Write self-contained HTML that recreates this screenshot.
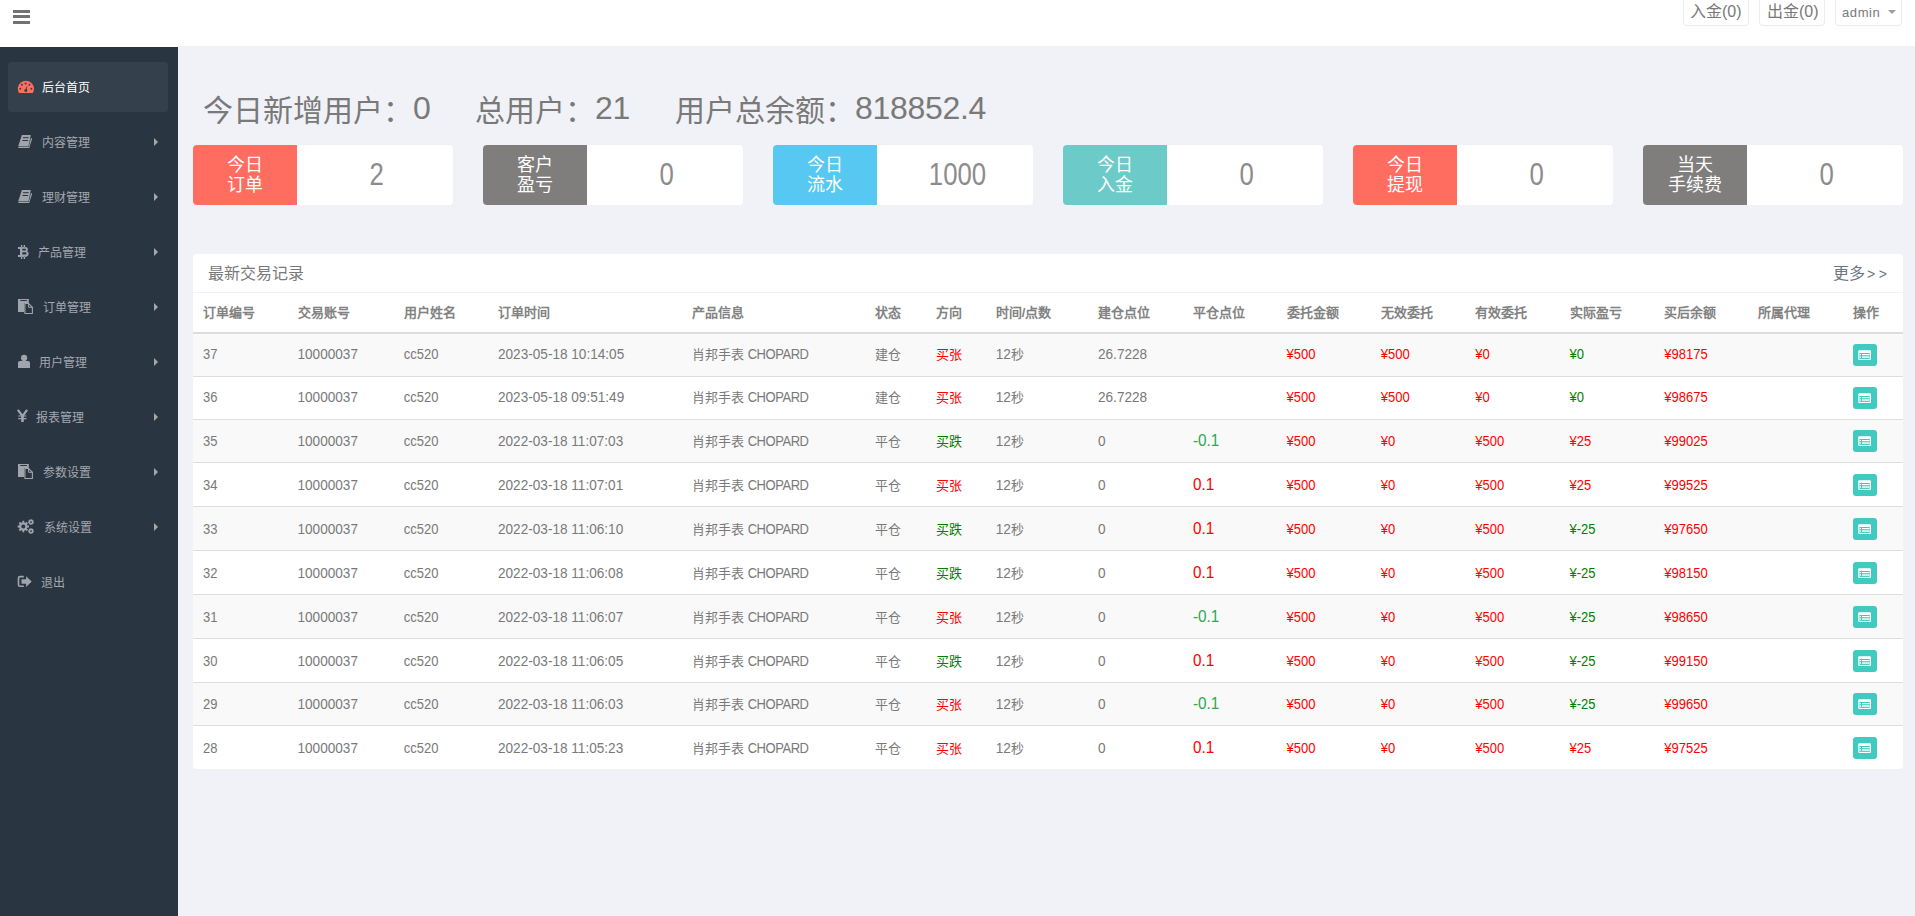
<!DOCTYPE html>
<html lang="zh-CN"><head><meta charset="utf-8"><title>后台首页</title>
<style>
*{box-sizing:border-box;margin:0;padding:0}
html,body{width:1915px;height:916px;overflow:hidden}
body{background:#f1f2f7;font-family:"Liberation Sans",sans-serif;color:#797979;position:relative}
.a{position:absolute;white-space:nowrap}
#hdr{left:0;top:0;width:1915px;height:46px;background:#fff}
.bar{position:absolute;left:13px;width:17px;height:3px;background:#727272}
.tb{position:absolute;top:-6px;height:32px;border:1px solid #ebebf0;border-radius:4px;background:#fff;color:#797979;font-size:16px;line-height:20px}
#side{left:0;top:47px;width:178px;height:869px;background:#2a3542}
.mi{position:absolute;left:0;width:178px;height:20px;font-size:12px;line-height:20px;color:#aeb2b7}
.mi .t{position:absolute;top:1px}
.mi svg{position:absolute}
.mi .arr{position:absolute;left:154px;top:6px;width:0;height:0;border-top:4px solid transparent;border-bottom:4px solid transparent;border-left:4px solid #a6a7a9}
.big{font-size:30px;line-height:34px;color:#797979}
.dg{position:relative;top:-2px;font-size:32px;letter-spacing:-0.3px}
.st{position:absolute;top:145px;width:260px;height:60px;background:#fff;border-radius:4px;overflow:hidden}
.st .sym{position:absolute;left:0;top:0;width:104px;height:60px;color:#fff;font-size:18px;line-height:20px;text-align:center;padding-top:10px}
.st .val{position:absolute;left:104px;top:0;width:156px;height:60px;text-align:center;font-size:31px;line-height:59px;color:#8c8c8c;padding-left:4px}
.st .val span{display:inline-block;transform:scaleX(0.83)}
#panel{left:193px;top:254px;width:1710px;height:515px;background:#fff;border-radius:4px;overflow:hidden}
.th{font-size:13px;font-weight:bold;color:#828282;line-height:20px}
.td{font-size:13px;color:#797979;line-height:20px}
.nb{font-size:13.6px}
.L{display:inline-block;transform:scaleY(1.1);transform-origin:0 14px}
.r{color:#ff0000}.g{color:#008000}
.pr{color:#ff0000;font-size:17px}.pg{color:#2eaa4f;font-size:17px}
.pr,.pg{transform:scaleX(0.9);transform-origin:0 0}
.btn{position:absolute;width:24px;height:22px;background:#41cac0;border-radius:3px}
</style></head><body>

<div id="hdr" class="a">
<div class="bar" style="top:10px"></div>
<div class="bar" style="top:15px"></div>
<div class="bar" style="top:21px"></div>
<div class="tb" style="left:1683px;width:66px"><span class="a" style="left:6px;top:7px">入金(0)</span></div>
<div class="tb" style="left:1759px;width:66px"><span class="a" style="left:7px;top:7px">出金(0)</span></div>
<div class="tb" style="left:1835px;width:67px"><span class="a" style="left:6px;top:10px;font-size:13px;letter-spacing:0.6px;line-height:16px">admin</span><span class="a" style="left:52px;top:15px;width:0;height:0;border-left:4px solid transparent;border-right:4px solid transparent;border-top:4px solid #9a9ca8"></span></div>
</div>
<div id="side" class="a"></div>
<div class="a" style="left:0;top:46px;width:178px;height:1px;background:#fff"></div>
<div class="a" style="left:8px;top:62px;width:160px;height:50px;background:#35404d;border-radius:4px"></div>
<div class="mi" style="top:77px;color:#fff;font-weight:500"><svg style="left:17px;top:3px" width="18" height="14" viewBox="0 0 18 14"><path d="M2.04 13.1A8.1 8.1 0 1 1 15.76 13.1z" fill="#ff6c60"/><g fill="#35404d"><circle cx="8.6" cy="3.4" r="1"/><circle cx="5" cy="4.8" r="1"/><circle cx="12.4" cy="4.8" r="1"/><circle cx="3.3" cy="8.7" r="1"/><circle cx="14.4" cy="8.7" r="1"/><circle cx="8.8" cy="10.4" r="1.5"/><path d="M8 10.2L10.4 5.3 9.6 10.6z"/></g></svg><span class="t" style="left:42px">后台首页</span>
</div>
<div class="mi" style="top:132px;color:#a4a8ae"><svg style="left:18px;top:3px" width="15" height="14" viewBox="0 0 15 14"><g fill="#a0a4ac"><path d="M3.9 0H12.8L10.5 11.2H0.2z"/><path d="M12.9 2.9L14.2 3.5 11.2 13H10.6z"/><path d="M0.1 11.8H11V13.1H0.6z"/></g><path d="M5 2.7H10.7M4.4 5.5H10.1" stroke="#2a3542" stroke-width="1"/></svg><span class="t" style="left:42px">内容管理</span>
<span class="arr"></span>
</div>
<div class="mi" style="top:187px;color:#a4a8ae"><svg style="left:18px;top:3px" width="15" height="14" viewBox="0 0 15 14"><g fill="#a0a4ac"><path d="M3.9 0H12.8L10.5 11.2H0.2z"/><path d="M12.9 2.9L14.2 3.5 11.2 13H10.6z"/><path d="M0.1 11.8H11V13.1H0.6z"/></g><path d="M5 2.7H10.7M4.4 5.5H10.1" stroke="#2a3542" stroke-width="1"/></svg><span class="t" style="left:41.5px">理财管理</span>
<span class="arr"></span>
</div>
<div class="mi" style="top:242px;color:#a4a8ae"><svg style="left:18px;top:3px" width="11" height="15" viewBox="0 0 11 15"><path fill="#a0a4ac" fill-rule="evenodd" d="M0 2.1H7.2C9.2 2.1 9.9 3.3 9.9 4.4 9.9 5.4 9.4 5.9 8.7 6.3 9.9 6.6 10.6 7.4 10.6 8.7 10.6 10.6 9.3 11.9 7 11.9H0V10H2V4H0Z M4.3 3.7H6.9C7.6 3.7 8 4.1 8 4.7 8 5.3 7.6 5.6 6.9 5.6H4.3Z M4.3 7.2H7.2C8 7.2 8.5 7.6 8.5 8.3 8.5 9.1 8 9.5 7.2 9.5H4.3Z M2.9 0H4.3V2.2H2.9Z M5.7 0H7.1V2.2H5.7Z M2.9 11.8H4.3V14H2.9Z M5.7 11.8H7.1V14H5.7Z"/></svg><span class="t" style="left:38px">产品管理</span>
<span class="arr"></span>
</div>
<div class="mi" style="top:297px;color:#a4a8ae"><svg style="left:18px;top:2px" width="16" height="16" viewBox="0 0 16 16"><path fill="#a0a4ac" fill-rule="evenodd" d="M0 0H10.8V3.9H6.2V12.9H0Z M2.3 1H8.9V2.1H2.3Z"/><path d="M6.9 4.5H10.6L14.4 8.3V14.5H6.9Z" fill="none" stroke="#a0a4ac" stroke-width="1.1"/><path d="M10.6 4.5V8.3H14.4" fill="none" stroke="#a0a4ac" stroke-width="1"/></svg><span class="t" style="left:42.5px">订单管理</span>
<span class="arr"></span>
</div>
<div class="mi" style="top:352px;color:#a4a8ae"><svg style="left:18px;top:2px" width="13" height="15" viewBox="0 0 13 15"><g fill="#a0a4ac"><circle cx="6.1" cy="3.9" r="3.1"/><path d="M0 14V9C0 7.8 0.8 7 2 7H10C11.2 7 12 7.8 12 9V14Z"/></g></svg><span class="t" style="left:39px">用户管理</span>
<span class="arr"></span>
</div>
<div class="mi" style="top:407px;color:#a4a8ae"><svg style="left:17px;top:2px" width="12" height="15" viewBox="0 0 12 15"><g fill="none" stroke="#a0a4ac"><path d="M0.9 0.9L5.5 7.2 10.1 0.9" stroke-width="2.2"/><path d="M5.5 6.8V13" stroke-width="2.6"/><path d="M1.2 7H9.4M1.2 9.6H9.4" stroke-width="1.1"/></g></svg><span class="t" style="left:36px">报表管理</span>
<span class="arr"></span>
</div>
<div class="mi" style="top:462px;color:#a4a8ae"><svg style="left:18px;top:2px" width="16" height="16" viewBox="0 0 16 16"><path fill="#a0a4ac" fill-rule="evenodd" d="M0 0H10.8V3.9H6.2V12.9H0Z M2.3 1H8.9V2.1H2.3Z"/><path d="M6.9 4.5H10.6L14.4 8.3V14.5H6.9Z" fill="none" stroke="#a0a4ac" stroke-width="1.1"/><path d="M10.6 4.5V8.3H14.4" fill="none" stroke="#a0a4ac" stroke-width="1"/></svg><span class="t" style="left:42.5px">参数设置</span>
<span class="arr"></span>
</div>
<div class="mi" style="top:517px;color:#a4a8ae"><svg style="left:17px;top:2px" width="19" height="17" viewBox="0 0 19 17"><g fill="#a0a4ac"><circle cx="6.3" cy="7.5" r="4.2"/><g stroke="#a0a4ac" stroke-width="1.8"><path d="M6.3 1.8V13.2M0.6 7.5H12M2.3 3.5L10.3 11.5M2.3 11.5L10.3 3.5"/></g><circle cx="14" cy="3.1" r="2.1"/><circle cx="14" cy="12.1" r="2.1"/><g stroke="#a0a4ac" stroke-width="1.2"><path d="M14 0.1V6.1M11 3.1H17M11.9 1L16.1 5.2M11.9 5.2L16.1 1M14 9.1V15.1M11 12.1H17M11.9 10L16.1 14.2M11.9 14.2L16.1 10"/></g></g><g fill="#2a3542"><circle cx="6.3" cy="7.5" r="2"/><circle cx="14" cy="3.1" r="0.95"/><circle cx="14" cy="12.1" r="0.95"/></g></svg><span class="t" style="left:44px">系统设置</span>
<span class="arr"></span>
</div>
<div class="mi" style="top:572px;color:#a4a8ae"><svg style="left:17px;top:3px" width="15" height="13" viewBox="0 0 15 13"><path d="M6.8 1.6H3C1.9 1.6 1.5 2.2 1.5 3.2V9.8C1.5 10.8 1.9 11.3 3 11.3H6.8" fill="none" stroke="#a0a4ac" stroke-width="1.6"/><path d="M4.5 4.2H9.1V1.2L14.7 6.5 9.1 12V8.8H4.5Z" fill="#a0a4ac"/></svg><span class="t" style="left:41px">退出</span>
</div>
<div class="a big" style="left:203px;top:93px">今日新增用户：<span class="dg">0</span></div>
<div class="a big" style="left:475px;top:93px">总用户：<span class="dg">21</span></div>
<div class="a big" style="left:675px;top:93px">用户总余额：<span class="dg">818852.4</span></div>
<div class="st" style="left:193px"><div class="sym" style="background:#ff6c60">今日<br>订单</div><div class="val"><span>2</span></div></div>
<div class="st" style="left:483px"><div class="sym" style="background:#7f7e7d">客户<br>盈亏</div><div class="val"><span>0</span></div></div>
<div class="st" style="left:773px"><div class="sym" style="background:#57c8f2">今日<br>流水</div><div class="val"><span>1000</span></div></div>
<div class="st" style="left:1063px"><div class="sym" style="background:#6ccac9">今日<br>入金</div><div class="val"><span>0</span></div></div>
<div class="st" style="left:1353px"><div class="sym" style="background:#ff6c60">今日<br>提现</div><div class="val"><span>0</span></div></div>
<div class="st" style="left:1643px"><div class="sym" style="background:#7f7e7d">当天<br>手续费</div><div class="val"><span>0</span></div></div>
<div id="panel" class="a">
<span class="a" style="left:15px;top:10px;font-size:16px;line-height:20px;color:#797979">最新交易记录</span>
<span class="a" style="left:1640px;top:10px;font-size:16px;line-height:20px;color:#6b7583">更多<span style="font-size:14px;letter-spacing:3.5px;position:relative;left:2px">&gt;&gt;</span></span>
<div class="a" style="left:0;top:38px;width:1710px;height:1px;background:#eff2f7"></div>
<span class="a th" style="left:10px;top:49px">订单编号</span>
<span class="a th" style="left:104.5px;top:49px">交易账号</span>
<span class="a th" style="left:210.75px;top:49px">用户姓名</span>
<span class="a th" style="left:305px;top:49px">订单时间</span>
<span class="a th" style="left:499px;top:49px">产品信息</span>
<span class="a th" style="left:682px;top:49px">状态</span>
<span class="a th" style="left:742.5px;top:49px">方向</span>
<span class="a th" style="left:802.75px;top:49px">时间/点数</span>
<span class="a th" style="left:905px;top:49px">建仓点位</span>
<span class="a th" style="left:999.5px;top:49px">平仓点位</span>
<span class="a th" style="left:1093.5px;top:49px">委托金额</span>
<span class="a th" style="left:1187.75px;top:49px">无效委托</span>
<span class="a th" style="left:1282.25px;top:49px">有效委托</span>
<span class="a th" style="left:1376.5px;top:49px">实际盈亏</span>
<span class="a th" style="left:1471.25px;top:49px">买后余额</span>
<span class="a th" style="left:1565.25px;top:49px">所属代理</span>
<span class="a th" style="left:1659.5px;top:49px">操作</span>
<div class="a" style="left:0;top:78px;width:1710px;height:2px;background:#dddddd"></div>
<div class="a" style="left:0;top:80px;width:1710px;height:42px;background:#f9f9f9"></div>
<div class="a" style="left:0;top:122px;width:1710px;height:1px;background:#dddddd"></div>
<span class="a td" style="left:10px;top:91.0px"><span class="L">37</span></span>
<span class="a td nb" style="left:104.5px;top:91.0px"><span class="L">10000037</span></span>
<span class="a td" style="left:210.75px;top:91.0px"><span class="L">cc520</span></span>
<span class="a td nb" style="left:305px;top:91.0px"><span class="L">2023-05-18 10:14:05</span></span>
<span class="a td" style="left:499px;top:91.0px">肖邦手表 <span class="L" style="letter-spacing:-0.45px">CHOPARD</span></span>
<span class="a td" style="left:682px;top:91.0px">建仓</span>
<span class="a td r" style="left:742.5px;top:91.0px">买张</span>
<span class="a td" style="left:802.75px;top:91.0px"><span class="nb L">12</span>秒</span>
<span class="a td nb" style="left:905px;top:91.0px"><span class="L">26.7228</span></span>
<span class="a td r" style="left:1093.5px;top:91.0px"><span class="L">¥500</span></span>
<span class="a td r" style="left:1187.75px;top:91.0px"><span class="L">¥500</span></span>
<span class="a td r" style="left:1282.25px;top:91.0px"><span class="L">¥0</span></span>
<span class="a td g" style="left:1376.5px;top:91.0px"><span class="L">¥0</span></span>
<span class="a td r" style="left:1471.25px;top:91.0px"><span class="L">¥98175</span></span>
<div class="btn" style="left:1660px;top:90.0px"><svg width="24" height="22" viewBox="0 0 24 22"><rect x="5.2" y="6.2" width="12.8" height="9.8" rx="1.2" fill="#fff"/><rect x="6.4" y="9" width="10.4" height="5.9" fill="#41cac0"/><rect x="9" y="10" width="7.6" height="1.2" fill="#fff"/><rect x="9" y="12.2" width="7.6" height="1.7" fill="#dff5f3"/><rect x="6.4" y="10" width="1.6" height="1.2" fill="#fff"/><rect x="6.4" y="12.2" width="1.6" height="1.7" fill="#dff5f3"/></svg></div>
<div class="a" style="left:0;top:165px;width:1710px;height:1px;background:#dddddd"></div>
<span class="a td" style="left:10px;top:134.0px"><span class="L">36</span></span>
<span class="a td nb" style="left:104.5px;top:134.0px"><span class="L">10000037</span></span>
<span class="a td" style="left:210.75px;top:134.0px"><span class="L">cc520</span></span>
<span class="a td nb" style="left:305px;top:134.0px"><span class="L">2023-05-18 09:51:49</span></span>
<span class="a td" style="left:499px;top:134.0px">肖邦手表 <span class="L" style="letter-spacing:-0.45px">CHOPARD</span></span>
<span class="a td" style="left:682px;top:134.0px">建仓</span>
<span class="a td r" style="left:742.5px;top:134.0px">买张</span>
<span class="a td" style="left:802.75px;top:134.0px"><span class="nb L">12</span>秒</span>
<span class="a td nb" style="left:905px;top:134.0px"><span class="L">26.7228</span></span>
<span class="a td r" style="left:1093.5px;top:134.0px"><span class="L">¥500</span></span>
<span class="a td r" style="left:1187.75px;top:134.0px"><span class="L">¥500</span></span>
<span class="a td r" style="left:1282.25px;top:134.0px"><span class="L">¥0</span></span>
<span class="a td g" style="left:1376.5px;top:134.0px"><span class="L">¥0</span></span>
<span class="a td r" style="left:1471.25px;top:134.0px"><span class="L">¥98675</span></span>
<div class="btn" style="left:1660px;top:133.0px"><svg width="24" height="22" viewBox="0 0 24 22"><rect x="5.2" y="6.2" width="12.8" height="9.8" rx="1.2" fill="#fff"/><rect x="6.4" y="9" width="10.4" height="5.9" fill="#41cac0"/><rect x="9" y="10" width="7.6" height="1.2" fill="#fff"/><rect x="9" y="12.2" width="7.6" height="1.7" fill="#dff5f3"/><rect x="6.4" y="10" width="1.6" height="1.2" fill="#fff"/><rect x="6.4" y="12.2" width="1.6" height="1.7" fill="#dff5f3"/></svg></div>
<div class="a" style="left:0;top:166px;width:1710px;height:42px;background:#f9f9f9"></div>
<div class="a" style="left:0;top:208px;width:1710px;height:1px;background:#dddddd"></div>
<span class="a td" style="left:10px;top:178.0px"><span class="L">35</span></span>
<span class="a td nb" style="left:104.5px;top:178.0px"><span class="L">10000037</span></span>
<span class="a td" style="left:210.75px;top:178.0px"><span class="L">cc520</span></span>
<span class="a td nb" style="left:305px;top:178.0px"><span class="L">2022-03-18 11:07:03</span></span>
<span class="a td" style="left:499px;top:178.0px">肖邦手表 <span class="L" style="letter-spacing:-0.45px">CHOPARD</span></span>
<span class="a td" style="left:682px;top:178.0px">平仓</span>
<span class="a td g" style="left:742.5px;top:178.0px">买跌</span>
<span class="a td" style="left:802.75px;top:178.0px"><span class="nb L">12</span>秒</span>
<span class="a td nb" style="left:905px;top:178.0px"><span class="L">0</span></span>
<span class="a pg" style="left:999.5px;top:176.0px;line-height:22px">-0.1</span>
<span class="a td r" style="left:1093.5px;top:178.0px"><span class="L">¥500</span></span>
<span class="a td r" style="left:1187.75px;top:178.0px"><span class="L">¥0</span></span>
<span class="a td r" style="left:1282.25px;top:178.0px"><span class="L">¥500</span></span>
<span class="a td r" style="left:1376.5px;top:178.0px"><span class="L">¥25</span></span>
<span class="a td r" style="left:1471.25px;top:178.0px"><span class="L">¥99025</span></span>
<div class="btn" style="left:1660px;top:176.0px"><svg width="24" height="22" viewBox="0 0 24 22"><rect x="5.2" y="6.2" width="12.8" height="9.8" rx="1.2" fill="#fff"/><rect x="6.4" y="9" width="10.4" height="5.9" fill="#41cac0"/><rect x="9" y="10" width="7.6" height="1.2" fill="#fff"/><rect x="9" y="12.2" width="7.6" height="1.7" fill="#dff5f3"/><rect x="6.4" y="10" width="1.6" height="1.2" fill="#fff"/><rect x="6.4" y="12.2" width="1.6" height="1.7" fill="#dff5f3"/></svg></div>
<div class="a" style="left:0;top:252px;width:1710px;height:1px;background:#dddddd"></div>
<span class="a td" style="left:10px;top:221.5px"><span class="L">34</span></span>
<span class="a td nb" style="left:104.5px;top:221.5px"><span class="L">10000037</span></span>
<span class="a td" style="left:210.75px;top:221.5px"><span class="L">cc520</span></span>
<span class="a td nb" style="left:305px;top:221.5px"><span class="L">2022-03-18 11:07:01</span></span>
<span class="a td" style="left:499px;top:221.5px">肖邦手表 <span class="L" style="letter-spacing:-0.45px">CHOPARD</span></span>
<span class="a td" style="left:682px;top:221.5px">平仓</span>
<span class="a td r" style="left:742.5px;top:221.5px">买张</span>
<span class="a td" style="left:802.75px;top:221.5px"><span class="nb L">12</span>秒</span>
<span class="a td nb" style="left:905px;top:221.5px"><span class="L">0</span></span>
<span class="a pr" style="left:999.5px;top:219.5px;line-height:22px">0.1</span>
<span class="a td r" style="left:1093.5px;top:221.5px"><span class="L">¥500</span></span>
<span class="a td r" style="left:1187.75px;top:221.5px"><span class="L">¥0</span></span>
<span class="a td r" style="left:1282.25px;top:221.5px"><span class="L">¥500</span></span>
<span class="a td r" style="left:1376.5px;top:221.5px"><span class="L">¥25</span></span>
<span class="a td r" style="left:1471.25px;top:221.5px"><span class="L">¥99525</span></span>
<div class="btn" style="left:1660px;top:219.5px"><svg width="24" height="22" viewBox="0 0 24 22"><rect x="5.2" y="6.2" width="12.8" height="9.8" rx="1.2" fill="#fff"/><rect x="6.4" y="9" width="10.4" height="5.9" fill="#41cac0"/><rect x="9" y="10" width="7.6" height="1.2" fill="#fff"/><rect x="9" y="12.2" width="7.6" height="1.7" fill="#dff5f3"/><rect x="6.4" y="10" width="1.6" height="1.2" fill="#fff"/><rect x="6.4" y="12.2" width="1.6" height="1.7" fill="#dff5f3"/></svg></div>
<div class="a" style="left:0;top:253px;width:1710px;height:43px;background:#f9f9f9"></div>
<div class="a" style="left:0;top:296px;width:1710px;height:1px;background:#dddddd"></div>
<span class="a td" style="left:10px;top:265.5px"><span class="L">33</span></span>
<span class="a td nb" style="left:104.5px;top:265.5px"><span class="L">10000037</span></span>
<span class="a td" style="left:210.75px;top:265.5px"><span class="L">cc520</span></span>
<span class="a td nb" style="left:305px;top:265.5px"><span class="L">2022-03-18 11:06:10</span></span>
<span class="a td" style="left:499px;top:265.5px">肖邦手表 <span class="L" style="letter-spacing:-0.45px">CHOPARD</span></span>
<span class="a td" style="left:682px;top:265.5px">平仓</span>
<span class="a td g" style="left:742.5px;top:265.5px">买跌</span>
<span class="a td" style="left:802.75px;top:265.5px"><span class="nb L">12</span>秒</span>
<span class="a td nb" style="left:905px;top:265.5px"><span class="L">0</span></span>
<span class="a pr" style="left:999.5px;top:263.5px;line-height:22px">0.1</span>
<span class="a td r" style="left:1093.5px;top:265.5px"><span class="L">¥500</span></span>
<span class="a td r" style="left:1187.75px;top:265.5px"><span class="L">¥0</span></span>
<span class="a td r" style="left:1282.25px;top:265.5px"><span class="L">¥500</span></span>
<span class="a td g" style="left:1376.5px;top:265.5px"><span class="L">¥-25</span></span>
<span class="a td r" style="left:1471.25px;top:265.5px"><span class="L">¥97650</span></span>
<div class="btn" style="left:1660px;top:263.5px"><svg width="24" height="22" viewBox="0 0 24 22"><rect x="5.2" y="6.2" width="12.8" height="9.8" rx="1.2" fill="#fff"/><rect x="6.4" y="9" width="10.4" height="5.9" fill="#41cac0"/><rect x="9" y="10" width="7.6" height="1.2" fill="#fff"/><rect x="9" y="12.2" width="7.6" height="1.7" fill="#dff5f3"/><rect x="6.4" y="10" width="1.6" height="1.2" fill="#fff"/><rect x="6.4" y="12.2" width="1.6" height="1.7" fill="#dff5f3"/></svg></div>
<div class="a" style="left:0;top:340px;width:1710px;height:1px;background:#dddddd"></div>
<span class="a td" style="left:10px;top:309.5px"><span class="L">32</span></span>
<span class="a td nb" style="left:104.5px;top:309.5px"><span class="L">10000037</span></span>
<span class="a td" style="left:210.75px;top:309.5px"><span class="L">cc520</span></span>
<span class="a td nb" style="left:305px;top:309.5px"><span class="L">2022-03-18 11:06:08</span></span>
<span class="a td" style="left:499px;top:309.5px">肖邦手表 <span class="L" style="letter-spacing:-0.45px">CHOPARD</span></span>
<span class="a td" style="left:682px;top:309.5px">平仓</span>
<span class="a td g" style="left:742.5px;top:309.5px">买跌</span>
<span class="a td" style="left:802.75px;top:309.5px"><span class="nb L">12</span>秒</span>
<span class="a td nb" style="left:905px;top:309.5px"><span class="L">0</span></span>
<span class="a pr" style="left:999.5px;top:307.5px;line-height:22px">0.1</span>
<span class="a td r" style="left:1093.5px;top:309.5px"><span class="L">¥500</span></span>
<span class="a td r" style="left:1187.75px;top:309.5px"><span class="L">¥0</span></span>
<span class="a td r" style="left:1282.25px;top:309.5px"><span class="L">¥500</span></span>
<span class="a td g" style="left:1376.5px;top:309.5px"><span class="L">¥-25</span></span>
<span class="a td r" style="left:1471.25px;top:309.5px"><span class="L">¥98150</span></span>
<div class="btn" style="left:1660px;top:307.5px"><svg width="24" height="22" viewBox="0 0 24 22"><rect x="5.2" y="6.2" width="12.8" height="9.8" rx="1.2" fill="#fff"/><rect x="6.4" y="9" width="10.4" height="5.9" fill="#41cac0"/><rect x="9" y="10" width="7.6" height="1.2" fill="#fff"/><rect x="9" y="12.2" width="7.6" height="1.7" fill="#dff5f3"/><rect x="6.4" y="10" width="1.6" height="1.2" fill="#fff"/><rect x="6.4" y="12.2" width="1.6" height="1.7" fill="#dff5f3"/></svg></div>
<div class="a" style="left:0;top:341px;width:1710px;height:43px;background:#f9f9f9"></div>
<div class="a" style="left:0;top:384px;width:1710px;height:1px;background:#dddddd"></div>
<span class="a td" style="left:10px;top:353.5px"><span class="L">31</span></span>
<span class="a td nb" style="left:104.5px;top:353.5px"><span class="L">10000037</span></span>
<span class="a td" style="left:210.75px;top:353.5px"><span class="L">cc520</span></span>
<span class="a td nb" style="left:305px;top:353.5px"><span class="L">2022-03-18 11:06:07</span></span>
<span class="a td" style="left:499px;top:353.5px">肖邦手表 <span class="L" style="letter-spacing:-0.45px">CHOPARD</span></span>
<span class="a td" style="left:682px;top:353.5px">平仓</span>
<span class="a td r" style="left:742.5px;top:353.5px">买张</span>
<span class="a td" style="left:802.75px;top:353.5px"><span class="nb L">12</span>秒</span>
<span class="a td nb" style="left:905px;top:353.5px"><span class="L">0</span></span>
<span class="a pg" style="left:999.5px;top:351.5px;line-height:22px">-0.1</span>
<span class="a td r" style="left:1093.5px;top:353.5px"><span class="L">¥500</span></span>
<span class="a td r" style="left:1187.75px;top:353.5px"><span class="L">¥0</span></span>
<span class="a td r" style="left:1282.25px;top:353.5px"><span class="L">¥500</span></span>
<span class="a td g" style="left:1376.5px;top:353.5px"><span class="L">¥-25</span></span>
<span class="a td r" style="left:1471.25px;top:353.5px"><span class="L">¥98650</span></span>
<div class="btn" style="left:1660px;top:351.5px"><svg width="24" height="22" viewBox="0 0 24 22"><rect x="5.2" y="6.2" width="12.8" height="9.8" rx="1.2" fill="#fff"/><rect x="6.4" y="9" width="10.4" height="5.9" fill="#41cac0"/><rect x="9" y="10" width="7.6" height="1.2" fill="#fff"/><rect x="9" y="12.2" width="7.6" height="1.7" fill="#dff5f3"/><rect x="6.4" y="10" width="1.6" height="1.2" fill="#fff"/><rect x="6.4" y="12.2" width="1.6" height="1.7" fill="#dff5f3"/></svg></div>
<div class="a" style="left:0;top:428px;width:1710px;height:1px;background:#dddddd"></div>
<span class="a td" style="left:10px;top:397.5px"><span class="L">30</span></span>
<span class="a td nb" style="left:104.5px;top:397.5px"><span class="L">10000037</span></span>
<span class="a td" style="left:210.75px;top:397.5px"><span class="L">cc520</span></span>
<span class="a td nb" style="left:305px;top:397.5px"><span class="L">2022-03-18 11:06:05</span></span>
<span class="a td" style="left:499px;top:397.5px">肖邦手表 <span class="L" style="letter-spacing:-0.45px">CHOPARD</span></span>
<span class="a td" style="left:682px;top:397.5px">平仓</span>
<span class="a td g" style="left:742.5px;top:397.5px">买跌</span>
<span class="a td" style="left:802.75px;top:397.5px"><span class="nb L">12</span>秒</span>
<span class="a td nb" style="left:905px;top:397.5px"><span class="L">0</span></span>
<span class="a pr" style="left:999.5px;top:395.5px;line-height:22px">0.1</span>
<span class="a td r" style="left:1093.5px;top:397.5px"><span class="L">¥500</span></span>
<span class="a td r" style="left:1187.75px;top:397.5px"><span class="L">¥0</span></span>
<span class="a td r" style="left:1282.25px;top:397.5px"><span class="L">¥500</span></span>
<span class="a td g" style="left:1376.5px;top:397.5px"><span class="L">¥-25</span></span>
<span class="a td r" style="left:1471.25px;top:397.5px"><span class="L">¥99150</span></span>
<div class="btn" style="left:1660px;top:395.5px"><svg width="24" height="22" viewBox="0 0 24 22"><rect x="5.2" y="6.2" width="12.8" height="9.8" rx="1.2" fill="#fff"/><rect x="6.4" y="9" width="10.4" height="5.9" fill="#41cac0"/><rect x="9" y="10" width="7.6" height="1.2" fill="#fff"/><rect x="9" y="12.2" width="7.6" height="1.7" fill="#dff5f3"/><rect x="6.4" y="10" width="1.6" height="1.2" fill="#fff"/><rect x="6.4" y="12.2" width="1.6" height="1.7" fill="#dff5f3"/></svg></div>
<div class="a" style="left:0;top:429px;width:1710px;height:42px;background:#f9f9f9"></div>
<div class="a" style="left:0;top:471px;width:1710px;height:1px;background:#dddddd"></div>
<span class="a td" style="left:10px;top:441.0px"><span class="L">29</span></span>
<span class="a td nb" style="left:104.5px;top:441.0px"><span class="L">10000037</span></span>
<span class="a td" style="left:210.75px;top:441.0px"><span class="L">cc520</span></span>
<span class="a td nb" style="left:305px;top:441.0px"><span class="L">2022-03-18 11:06:03</span></span>
<span class="a td" style="left:499px;top:441.0px">肖邦手表 <span class="L" style="letter-spacing:-0.45px">CHOPARD</span></span>
<span class="a td" style="left:682px;top:441.0px">平仓</span>
<span class="a td r" style="left:742.5px;top:441.0px">买张</span>
<span class="a td" style="left:802.75px;top:441.0px"><span class="nb L">12</span>秒</span>
<span class="a td nb" style="left:905px;top:441.0px"><span class="L">0</span></span>
<span class="a pg" style="left:999.5px;top:439.0px;line-height:22px">-0.1</span>
<span class="a td r" style="left:1093.5px;top:441.0px"><span class="L">¥500</span></span>
<span class="a td r" style="left:1187.75px;top:441.0px"><span class="L">¥0</span></span>
<span class="a td r" style="left:1282.25px;top:441.0px"><span class="L">¥500</span></span>
<span class="a td g" style="left:1376.5px;top:441.0px"><span class="L">¥-25</span></span>
<span class="a td r" style="left:1471.25px;top:441.0px"><span class="L">¥99650</span></span>
<div class="btn" style="left:1660px;top:439.0px"><svg width="24" height="22" viewBox="0 0 24 22"><rect x="5.2" y="6.2" width="12.8" height="9.8" rx="1.2" fill="#fff"/><rect x="6.4" y="9" width="10.4" height="5.9" fill="#41cac0"/><rect x="9" y="10" width="7.6" height="1.2" fill="#fff"/><rect x="9" y="12.2" width="7.6" height="1.7" fill="#dff5f3"/><rect x="6.4" y="10" width="1.6" height="1.2" fill="#fff"/><rect x="6.4" y="12.2" width="1.6" height="1.7" fill="#dff5f3"/></svg></div>
<span class="a td" style="left:10px;top:484.5px"><span class="L">28</span></span>
<span class="a td nb" style="left:104.5px;top:484.5px"><span class="L">10000037</span></span>
<span class="a td" style="left:210.75px;top:484.5px"><span class="L">cc520</span></span>
<span class="a td nb" style="left:305px;top:484.5px"><span class="L">2022-03-18 11:05:23</span></span>
<span class="a td" style="left:499px;top:484.5px">肖邦手表 <span class="L" style="letter-spacing:-0.45px">CHOPARD</span></span>
<span class="a td" style="left:682px;top:484.5px">平仓</span>
<span class="a td r" style="left:742.5px;top:484.5px">买张</span>
<span class="a td" style="left:802.75px;top:484.5px"><span class="nb L">12</span>秒</span>
<span class="a td nb" style="left:905px;top:484.5px"><span class="L">0</span></span>
<span class="a pr" style="left:999.5px;top:482.5px;line-height:22px">0.1</span>
<span class="a td r" style="left:1093.5px;top:484.5px"><span class="L">¥500</span></span>
<span class="a td r" style="left:1187.75px;top:484.5px"><span class="L">¥0</span></span>
<span class="a td r" style="left:1282.25px;top:484.5px"><span class="L">¥500</span></span>
<span class="a td r" style="left:1376.5px;top:484.5px"><span class="L">¥25</span></span>
<span class="a td r" style="left:1471.25px;top:484.5px"><span class="L">¥97525</span></span>
<div class="btn" style="left:1660px;top:482.5px"><svg width="24" height="22" viewBox="0 0 24 22"><rect x="5.2" y="6.2" width="12.8" height="9.8" rx="1.2" fill="#fff"/><rect x="6.4" y="9" width="10.4" height="5.9" fill="#41cac0"/><rect x="9" y="10" width="7.6" height="1.2" fill="#fff"/><rect x="9" y="12.2" width="7.6" height="1.7" fill="#dff5f3"/><rect x="6.4" y="10" width="1.6" height="1.2" fill="#fff"/><rect x="6.4" y="12.2" width="1.6" height="1.7" fill="#dff5f3"/></svg></div>
</div>
</body></html>
